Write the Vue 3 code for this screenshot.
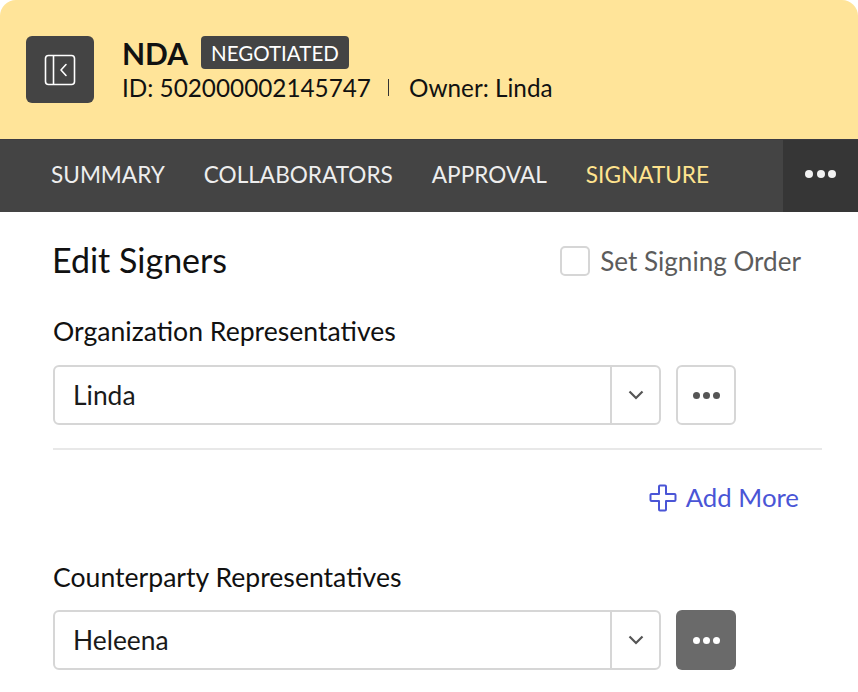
<script setup>
const sections = [
  { label: 'Organization Representatives', value: 'Linda', active: false },
  { label: 'Counterparty Representatives', value: 'Heleena', active: true },
]
const tabs = ['Summary', 'Collaborators', 'Approval', 'Signature']
</script>

<template>
  <div class="page">
    <header class="head">
      <button class="back">
        <svg width="32" height="32" viewBox="0 0 32 32" fill="none" stroke="#fff" stroke-width="1.6">
          <rect x="1.5" y="1.5" width="29" height="29" rx="3" />
          <path d="M9.500 1.500v29" />
          <path d="M22 10.500l-5 5.500 5 5.500" stroke-linecap="round" stroke-linejoin="round" />
        </svg>
      </button>
      <div class="info">
        <div class="title-row">
          <span class="title">NDA</span>
          <span class="badge">NEGOTIATED</span>
        </div>
        <div class="meta">
          <span>ID: 502000002145747</span>
          <i class="sep"></i>
          <span>Owner: Linda</span>
        </div>
      </div>
    </header>

    <nav class="tabs">
      <div class="tab-list">
        <a v-for="tab in tabs" :key="tab" class="tab" :class="{ current: tab === 'Signature' }">{{ tab }}</a>
      </div>
      <div class="tab-more">
        <span class="dots light"><i></i><i></i><i></i></span>
      </div>
    </nav>

    <main class="body">
      <div class="top-row">
        <h2>Edit Signers</h2>
        <label class="order">
          <span class="check"></span>
          Set Signing Order
        </label>
      </div>

      <section v-for="(s, i) in sections" :key="s.label" class="section" :class="{ second: i === 1 }">
        <div class="label">{{ s.label }}</div>
        <div class="row">
          <div class="select">
            <span class="value">{{ s.value }}</span>
            <span class="caret">
              <svg width="16" height="10" viewBox="0 0 16 10" fill="none" stroke="#555" stroke-width="2.2">
                <path d="M1.500 1.500L8 8l6.500-6.500" />
              </svg>
            </span>
          </div>
          <button class="more" :class="{ active: s.active }">
            <span class="dots"><i></i><i></i><i></i></span>
          </button>
        </div>
        <template v-if="i === 0">
          <hr class="rule" />
          <div class="add">
            <svg width="28" height="28" viewBox="0 0 28 28" fill="none" stroke="#4a55d6" stroke-width="2">
              <path d="M10 2.500a1 1 0 0 1 1-1h5a1 1 0 0 1 1 1V10h8.500a1 1 0 0 1 1 1v5a1 1 0 0 1-1 1H17v8.500a1 1 0 0 1-1 1h-5a1 1 0 0 1-1-1V17H2.500a1 1 0 0 1-1-1v-5a1 1 0 0 1 1-1H10z" stroke-linejoin="round" />
            </svg>
            <span class="add-text">Add More</span>
          </div>
        </template>
      </section>
    </main>
  </div>
</template>

<style>
html, body {
  background: #fff;
}
</style>

<style scoped>
.page {
  width: 858px;
  height: 692px;
  overflow: hidden;
  background: #fff;
  font-family: Lato, "Liberation Sans", sans-serif;
  color: #1a1a1a;
}

.head {
  height: 139px;
  box-sizing: border-box;
  display: flex;
  gap: 28px;
  padding: 36px 26px 0;
  background: #ffe499;
  border-radius: 16px 16px 0 0;
}

.back {
  width: 68px;
  height: 67px;
  padding: 0;
  border: none;
  border-radius: 6px;
  background: #444;
  display: flex;
  align-items: center;
  justify-content: center;
}

.info {
  display: flex;
  flex-direction: column;
}

.title-row {
  display: flex;
  align-items: center;
  gap: 13px;
  height: 33px;
}

.title {
  font-size: 30px;
  font-weight: 700;
  color: #111;
}

.badge {
  height: 33px;
  line-height: 34px;
  padding: 0 10px;
  border-radius: 4px;
  background: #444;
  color: #fff;
  font-size: 20.500px;
}

.meta {
  display: flex;
  align-items: center;
  margin-top: 1px;
  height: 34px;
  font-size: 24.300px;
  color: #111;
}

.sep {
  width: 1.500px;
  height: 17px;
  margin: 0 19.500px 0 17px;
  background: #333;
}

.tabs {
  height: 73px;
  box-sizing: border-box;
  border-top: 1px solid #3b3b42;
  display: flex;
  justify-content: space-between;
  background: #444;
}

.tab-list {
  display: flex;
  align-items: center;
  gap: 39px;
  padding: 0 0 3px 51px;
}

.tab {
  font-size: 22.600px;
  text-transform: uppercase;
  color: #eee;
}

.tab.current {
  color: #ffe38e;
}

.tab-more {
  width: 75px;
  padding-bottom: 4px;
  box-sizing: border-box;
  background: #363636;
  display: flex;
  align-items: center;
  justify-content: center;
}

.dots {
  display: flex;
  gap: 3px;
}

.dots i {
  width: 7px;
  height: 7px;
  border-radius: 50%;
  background: #555;
}

.dots.light {
  gap: 3.500px;
}

.dots.light i {
  width: 8px;
  height: 8px;
  background: #f2f2f2;
}

.body {
  padding: 0 36px 0 53px;
}

.top-row {
  display: flex;
  align-items: center;
  justify-content: space-between;
  height: 98px;
  padding-right: 21px;
}

h2 {
  margin: -3px 0 0 -1px;
  font-size: 34px;
  font-weight: 400;
  color: #111;
}

.order {
  display: flex;
  align-items: center;
  gap: 10px;
  font-size: 26.100px;
  color: #5c5c5c;
}

.check {
  width: 26px;
  height: 26px;
  border: 2px solid #d6d6d6;
  border-radius: 5px;
}

.section {
  padding-top: 6px;
}

.label {
  font-size: 26.600px;
  line-height: 30px;
  color: #111;
}

.row {
  display: flex;
  gap: 15px;
  margin-top: 19px;
}

.second .row {
  margin-top: 18px;
}

.select {
  width: 608px;
  height: 60px;
  box-sizing: border-box;
  display: flex;
  align-items: center;
  justify-content: space-between;
  border: 2px solid #d6d6d6;
  border-radius: 6px;
}

.value {
  padding-left: 18px;
  font-size: 26.400px;
  color: #1a1a1a;
}

.caret {
  width: 49px;
  height: 100%;
  box-sizing: border-box;
  border-left: 2px solid #d6d6d6;
  display: flex;
  align-items: center;
  justify-content: center;
}

.more {
  width: 60px;
  height: 60px;
  padding: 0;
  box-sizing: border-box;
  border: 2px solid #d6d6d6;
  border-radius: 6px;
  background: #fff;
  display: flex;
  align-items: center;
  justify-content: center;
}

.more.active {
  border: none;
  background: #6a6a6a;
}

.more.active .dots i {
  background: #fff;
}

.rule {
  margin: 23px 0 0;
  border: none;
  border-top: 2px solid #e8e8e8;
}

.add {
  display: flex;
  align-items: center;
  justify-content: flex-end;
  gap: 9px;
  margin-top: 33px;
  padding-right: 23px;
  font-size: 25.800px;
  line-height: 28px;
  color: #4a55d6;
}

.add-text {
  padding-bottom: 2px;
}

.second {
  margin-top: 43px;
}
</style>
